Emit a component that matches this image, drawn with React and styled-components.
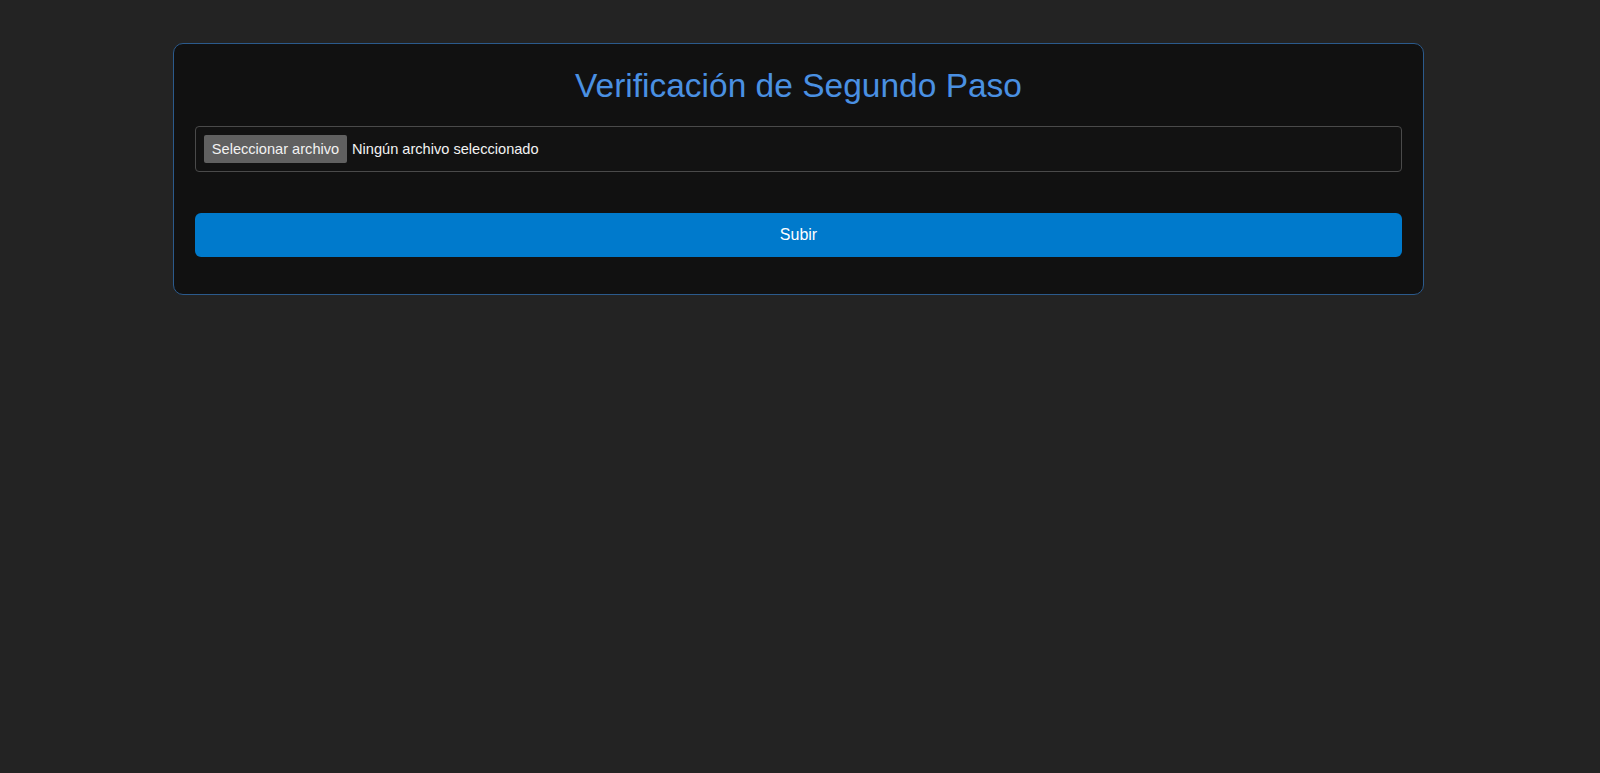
import { useState } from "react";
import styled, { createGlobalStyle } from "styled-components";

const GlobalStyle = createGlobalStyle`
  html, body {
    margin: 0;
    padding: 0;
    background-color: #232323;
    font-family: "Liberation Sans", Arial, sans-serif;
  }
`;

const App = () => {
  const [fileName, setFileName] = useState("");

  const changeHandler = (e) => {
    const file = e.target.files && e.target.files[0];
    setFileName(file ? file.name : "");
  };

  return (
    <>
      <GlobalStyle />
      <Page>
        <Card>
          <Title>Verificación de Segundo Paso</Title>
          <StyledForm onSubmit={(e) => e.preventDefault()}>
            <FileField>
              <HiddenInput type="file" onChange={changeHandler} />
              <FileButton>Seleccionar archivo</FileButton>
              <FileName>{fileName || "Ningún archivo seleccionado"}</FileName>
            </FileField>
            <Button type="submit">Subir</Button>
          </StyledForm>
        </Card>
      </Page>
    </>
  );
};

export default App;

const Page = styled.div`
  min-height: 100vh;
  padding-top: 43px;
  box-sizing: border-box;
  display: flex;
  justify-content: center;
  align-items: flex-start;
`;

const Card = styled.div`
  width: 1251px;
  margin-right: 3px;
  box-sizing: border-box;
  background-color: #111111;
  border: 1px solid #2b5a8c;
  border-radius: 10px;
  padding: 21px;
`;

const Title = styled.h1`
  margin: 2px 0 22px;
  text-align: center;
  font-size: 33.5px;
  line-height: 37px;
  font-weight: 400;
  color: #4a90e2;
`;

const StyledForm = styled.form`
  display: flex;
  flex-direction: column;
`;

const FileField = styled.label`
  display: flex;
  align-items: center;
  height: 46px;
  box-sizing: border-box;
  padding: 0 8px;
  border: 1px solid #4a4a4a;
  border-radius: 4px;
  background-color: #121212;
  cursor: pointer;
  margin-bottom: 41px;
`;

const HiddenInput = styled.input`
  display: none;
`;

const FileButton = styled.span`
  display: inline-flex;
  align-items: center;
  justify-content: center;
  width: 143px;
  height: 28px;
  background-color: #606060;
  border-radius: 2px;
  color: #f2f2f2;
  font-size: 14.6px;
`;

const FileName = styled.span`
  margin-left: 5px;
  color: #f2f2f2;
  font-size: 14.6px;
`;

const Button = styled.button`
  height: 44px;
  border: none;
  border-radius: 6px;
  background-color: #007acc;
  color: #ffffff;
  font-family: "Liberation Sans", Arial, sans-serif;
  font-size: 16px;
  cursor: pointer;
  margin-bottom: 16px;

  &:hover {
    background-color: #0069b0;
  }
`;
